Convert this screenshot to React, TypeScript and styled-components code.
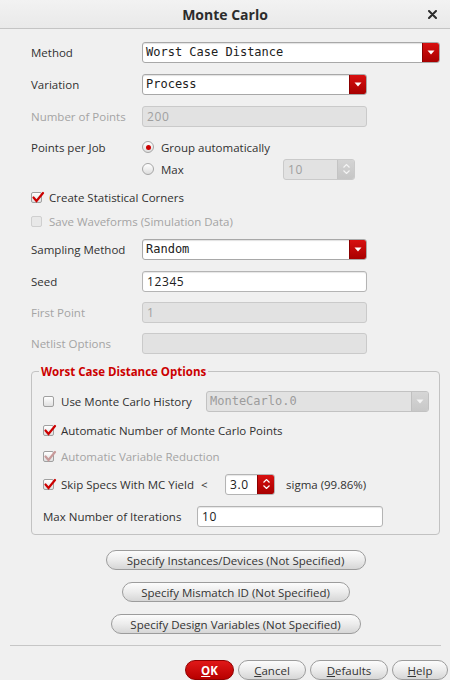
import React from "react";
import styled, { createGlobalStyle } from "styled-components";

const Global = createGlobalStyle`
  html, body { margin: 0; padding: 0; background: #f0f0f0; }
  body { font-family: "Open Sans", "Noto Sans", sans-serif; font-size: 11.5px; color: #303030; }
  * { box-sizing: border-box; }
`;

const Window = styled.div`
  width: 450px;
  height: 680px;
  overflow: hidden;
  background: #f0f0f0;
`;

const TitleBar = styled.div`
  height: 29px;
  border-bottom: 1px solid #c4c4c4;
  background: linear-gradient(#f2f2f2, #e9e9e9);
  display: flex;
  align-items: center;
  justify-content: center;
  position: relative;
`;

const Title = styled.div`
  font-weight: 700;
  font-size: 14px;
  color: #2c2c2c;
`;

const Close = styled.svg`
  position: absolute;
  right: 13px;
  top: 10px;
`;

const Content = styled.div`
  padding: 13px 10px 0 31px;
  display: flex;
  flex-direction: column;
`;

const Row = styled.div<{ $mt?: number }>`
  display: flex;
  align-items: center;
  height: 20px;
  flex-shrink: 0;
  margin-top: ${(p) => p.$mt ?? 0}px;
`;

const Label = styled.div<{ $disabled?: boolean; $w?: number }>`
  width: ${(p) => p.$w ?? 111}px;
  flex-shrink: 0;
  color: ${(p) => (p.$disabled ? "#a4a4a4" : "#303030")};
  white-space: nowrap;
`;

const Combo = styled.div<{ $w: number; $disabled?: boolean }>`
  width: ${(p) => p.$w}px;
  height: 21px;
  display: flex;
  flex-shrink: 0;
  border: 1px solid ${(p) => (p.$disabled ? "#c2c2c2" : "#a8a8a8")};
  border-radius: 3px;
  background: ${(p) => (p.$disabled ? "#e2e2e2" : "#ffffff")};
  box-shadow: ${(p) => (p.$disabled ? "none" : "inset 0 1px 1px rgba(0,0,0,0.12)")};
  overflow: hidden;
`;

const ComboText = styled.div<{ $disabled?: boolean }>`
  flex: 1;
  padding-left: 3px;
  font-family: "DejaVu Sans Mono", "Liberation Mono", monospace;
  font-size: 12px;
  line-height: 19px;
  color: ${(p) => (p.$disabled ? "#9c9c9c" : "#202020")};
  white-space: nowrap;
`;

const DropBtn = styled.div<{ $disabled?: boolean }>`
  width: 17px;
  flex-shrink: 0;
  display: flex;
  align-items: center;
  justify-content: center;
  background: ${(p) =>
    p.$disabled
      ? "linear-gradient(#d6d6d6, #c8c8c8)"
      : "linear-gradient(#d81010, #a80000)"};
  border-left: 1px solid ${(p) => (p.$disabled ? "#c0c0c0" : "#8a0000")};
`;

const Input = styled.div<{ $w: number; $disabled?: boolean }>`
  width: ${(p) => p.$w}px;
  height: 21px;
  flex-shrink: 0;
  border: 1px solid ${(p) => (p.$disabled ? "#cacaca" : "#b4b4b4")};
  border-radius: 3px;
  background: ${(p) => (p.$disabled ? "#e2e2e2" : "#ffffff")};
  box-shadow: ${(p) => (p.$disabled ? "none" : "inset 0 1px 1px rgba(0,0,0,0.1)")};
  padding-left: 4px;
  line-height: 19px;
  font-size: 12px;
  letter-spacing: 0.6px;
  color: ${(p) => (p.$disabled ? "#a0a0a0" : "#202020")};
  display: flex;
  overflow: hidden;
`;

const InputText = styled.div`
  flex: 1;
`;

const SpinBtns = styled.div<{ $red?: boolean }>`
  width: 17px;
  flex-shrink: 0;
  display: flex;
  flex-direction: column;
  align-items: center;
  justify-content: center;
  gap: 2px;
  background: ${(p) => (p.$red ? "linear-gradient(#d81010, #a80000)" : "linear-gradient(#d4d4d4, #c6c6c6)")};
  border-left: 1px solid ${(p) => (p.$red ? "#8a0000" : "#c4c4c4")};
`;

const Option = styled.div<{ $disabled?: boolean; $w?: number }>`
  display: flex;
  align-items: center;
  height: 20px;
  flex-shrink: 0;
  ${(p) => (p.$w ? `width: ${p.$w}px;` : "")}
  color: ${(p) => (p.$disabled ? "#a4a4a4" : "#303030")};
  white-space: nowrap;
`;

const RadioCircle = styled.div<{ $on?: boolean }>`
  width: 12px;
  height: 12px;
  border-radius: 50%;
  border: 1px solid #a6a6a6;
  background: linear-gradient(#ffffff, #dedede);
  margin-right: 7px;
  display: flex;
  align-items: center;
  justify-content: center;
  &::after {
    content: "";
    width: 5px;
    height: 5px;
    border-radius: 50%;
    background: #cc0000;
    display: ${(p) => (p.$on ? "block" : "none")};
  }
`;

const Box = styled.div<{ $disabled?: boolean }>`
  width: 11px;
  height: 11px;
  border: 1px solid ${(p) => (p.$disabled ? "#cfcfcf" : "#a0a0a0")};
  border-radius: 2px;
  background: ${(p) => (p.$disabled ? "#e8e8e8" : "linear-gradient(#ffffff, #e0e0e0)")};
  margin-right: 7px;
  position: relative;
  flex-shrink: 0;
`;

const Tick = styled.svg`
  position: absolute;
  left: 0;
  top: -2px;
`;

const Group = styled.fieldset`
  margin: 11px 0 0 0;
  padding: 12px 0 8px 11px;
  border: 1px solid #c2c2c2;
  border-radius: 4px;
  min-width: 0;
`;

const Legend = styled.legend`
  margin-left: -4px;
  padding: 0 2px;
  color: #cc0000;
  font-weight: 700;
  font-size: 11.5px;
`;

const Specs = styled.div`
  display: flex;
  flex-direction: column;
  align-items: center;
  margin-top: 15px;
  gap: 12px;
`;

const PillButton = styled.div<{ $w: number }>`
  width: ${(p) => p.$w}px;
  height: 20px;
  flex-shrink: 0;
  border: 1px solid #9c9c9c;
  border-radius: 10px;
  background: linear-gradient(#fcfcfc, #ececec 50%, #d6d6d6);
  display: flex;
  align-items: center;
  justify-content: center;
  color: #333;
  font-size: 11.5px;
  white-space: nowrap;
`;

const Separator = styled.div`
  height: 1px;
  background: #c6c6c6;
  margin: 11px 9px 0 10px;
`;

const Footer = styled.div`
  display: flex;
  justify-content: flex-end;
  gap: 4px;
  padding-right: 2px;
  margin-top: 14px;
`;

const FootButton = styled(PillButton)<{ $primary?: boolean }>`
  ${(p) =>
    p.$primary
      ? `background: linear-gradient(#e01818, #b80000); border-color: #8e0000; color: #fff; font-weight: 700;`
      : ""}
  u { text-decoration: underline; }
`;

const Lt = styled.div`
  width: 24px;
  flex-shrink: 0;
`;

const SigmaText = styled.div`
  margin-left: 11px;
  white-space: nowrap;
`;

const DownArrow = ({ color }: { color: string }) => (
  <svg width="8" height="5" viewBox="0 0 8 5">
    <path d="M0.5 0.5 L7.5 0.5 L4 4.5 Z" fill={color} />
  </svg>
);

const UpTri = ({ color }: { color: string }) => (
  <svg width="7" height="4" viewBox="0 0 7 4">
    <path d="M0.5 3.5 L3.5 0.5 L6.5 3.5" fill="none" stroke={color} strokeWidth="1.2" />
  </svg>
);
const DownTri = ({ color }: { color: string }) => (
  <svg width="7" height="4" viewBox="0 0 7 4">
    <path d="M0.5 0.5 L3.5 3.5 L6.5 0.5" fill="none" stroke={color} strokeWidth="1.2" />
  </svg>
);

const Check = ({
  on,
  disabled,
  label,
  w,
}: {
  on?: boolean;
  disabled?: boolean;
  label: string;
  w?: number;
}) => (
  <Option $disabled={disabled} $w={w}>
    <Box $disabled={disabled && !on}>
      {on && (
        <Tick width="13" height="12" viewBox="0 0 13 12">
          <path
            d="M1.5 6.5 L4.5 10 L11 2"
            fill="none"
            stroke={disabled ? "#c89a9a" : "#cc0000"}
            strokeWidth="2.2"
            strokeLinecap="round"
          />
        </Tick>
      )}
    </Box>
    {label}
  </Option>
);

export default function App() {
  return (
    <Window>
      <Global />
      <TitleBar>
        <Title>Monte Carlo</Title>
        <Close width="9" height="9" viewBox="0 0 9 9">
          <path d="M1 1 L8 8 M8 1 L1 8" stroke="#2c2c2c" strokeWidth="2" strokeLinecap="round" />
        </Close>
      </TitleBar>
      <Content>
        <Row>
          <Label>Method</Label>
          <Combo $w={298}>
            <ComboText>Worst Case Distance</ComboText>
            <DropBtn>
              <DownArrow color="#fff" />
            </DropBtn>
          </Combo>
        </Row>
        <Row $mt={12}>
          <Label>Variation</Label>
          <Combo $w={225}>
            <ComboText>Process</ComboText>
            <DropBtn>
              <DownArrow color="#fff" />
            </DropBtn>
          </Combo>
        </Row>
        <Row $mt={12}>
          <Label $disabled>Number of Points</Label>
          <Input $w={225} $disabled>
            <InputText>200</InputText>
          </Input>
        </Row>
        <Row $mt={11}>
          <Label>Points per Job</Label>
          <Option>
            <RadioCircle $on />
            Group automatically
          </Option>
        </Row>
        <Row $mt={2}>
          <Label />
          <Option $w={141}>
            <RadioCircle />
            Max
          </Option>
          <Input $w={72} $disabled>
            <InputText>10</InputText>
            <SpinBtns>
              <UpTri color="#f4f4f4" />
              <DownTri color="#f4f4f4" />
            </SpinBtns>
          </Input>
        </Row>
        <Row $mt={8}>
          <Check on label="Create Statistical Corners" />
        </Row>
        <Row $mt={4}>
          <Check disabled label="Save Waveforms (Simulation Data)" />
        </Row>
        <Row $mt={8}>
          <Label>Sampling Method</Label>
          <Combo $w={225}>
            <ComboText>Random</ComboText>
            <DropBtn>
              <DownArrow color="#fff" />
            </DropBtn>
          </Combo>
        </Row>
        <Row $mt={12}>
          <Label>Seed</Label>
          <Input $w={225}>
            <InputText>12345</InputText>
          </Input>
        </Row>
        <Row $mt={11}>
          <Label $disabled>First Point</Label>
          <Input $w={225} $disabled>
            <InputText>1</InputText>
          </Input>
        </Row>
        <Row $mt={11}>
          <Label $disabled>Netlist Options</Label>
          <Input $w={225} $disabled />
        </Row>

        <Group>
          <Legend>Worst Case Distance Options</Legend>
          <Row>
            <Check w={163} label="Use Monte Carlo History" />
            <Combo $w={223} $disabled>
              <ComboText $disabled>MonteCarlo.0</ComboText>
              <DropBtn $disabled>
                <DownArrow color="#f4f4f4" />
              </DropBtn>
            </Combo>
          </Row>
          <Row $mt={9}>
            <Check on label="Automatic Number of Monte Carlo Points" />
          </Row>
          <Row $mt={6}>
            <Check on disabled label="Automatic Variable Reduction" />
          </Row>
          <Row $mt={8}>
            <Check on w={158} label="Skip Specs With MC Yield" />
            <Lt>&lt;</Lt>
            <Input $w={50}>
              <InputText>3.0</InputText>
              <SpinBtns $red>
                <UpTri color="#fff" />
                <DownTri color="#fff" />
              </SpinBtns>
            </Input>
            <SigmaText>sigma (99.86%)</SigmaText>
          </Row>
          <Row $mt={12}>
            <Label $w={154}>Max Number of Iterations</Label>
            <Input $w={186}>
              <InputText>10</InputText>
            </Input>
          </Row>
        </Group>

        <Specs>
          <PillButton $w={260}>Specify Instances/Devices (Not Specified)</PillButton>
          <PillButton $w={228}>Specify Mismatch ID (Not Specified)</PillButton>
          <PillButton $w={250}>Specify Design Variables (Not Specified)</PillButton>
        </Specs>
      </Content>
      <Separator />
      <Footer>
        <FootButton $w={49} $primary>
          <u>O</u>K
        </FootButton>
        <FootButton $w={68}>
          <u>C</u>ancel
        </FootButton>
        <FootButton $w={78}>
          <u>D</u>efaults
        </FootButton>
        <FootButton $w={56}>
          <u>H</u>elp
        </FootButton>
      </Footer>
    </Window>
  );
}
